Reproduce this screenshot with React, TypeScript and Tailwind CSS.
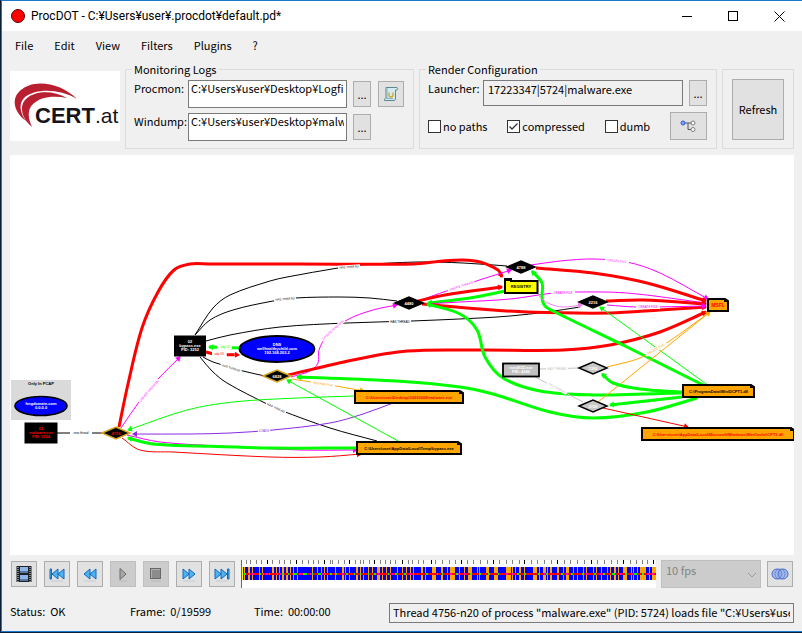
import { useState } from 'react';
import type { ReactNode } from 'react';

type Point = [number, number];

interface EdgeData {
  color: string;
  points: Point[];
  width?: number;
  arrow?: boolean;
  dash?: string;
}

interface LabelData {
  x: number;
  y: number;
  text: string;
  color: string;
  rotate?: number;
}

const RED = '#ff0000';
const GREEN = '#00ff00';
const PINK = '#ff00ff';
const BLACK = '#000000';
const ORANGE = '#ffa500';
const PURPLE = '#8a2be2';
const GRAY = '#c4c4c4';

const edges: EdgeData[] = [
  { color: BLACK, points: [[195, 335], [213, 308], [230, 295], [270, 281], [287, 277], [338, 268], [360, 265], [417, 262], [463, 263], [507, 266]] },
  { color: BLACK, points: [[195, 335], [210, 320], [233, 310], [273, 301], [295, 298], [340, 297], [370, 298], [397, 301]] },
  { color: BLACK, points: [[206, 341], [230, 335], [280, 327], [347, 323], [412, 321], [480, 318], [510, 316], [547, 312], [580, 307]] },
  { color: BLACK, points: [[203, 357], [213, 362], [243, 371], [265, 376]] },
  { color: BLACK, points: [[200, 357], [212, 371], [227, 383], [267, 404], [280, 410], [330, 428], [377, 441]] },
  { color: BLACK, points: [[57, 433], [103, 433]] },
  { color: RED, width: 3, arrow: true, points: [[119, 427], [128, 384], [142, 328], [158, 292], [174, 270], [190, 264], [210, 264], [300, 264], [413, 264], [443, 261], [463, 260], [480, 262], [498, 270], [502, 277]] },
  { color: GREEN, width: 3, arrow: true, dash: '10 13', points: [[240, 348], [209, 347]] },
  { color: RED, width: 3, arrow: true, dash: '8 13', points: [[206, 352], [214, 354], [239, 355]] },
  { color: PINK, arrow: true, points: [[121, 428], [139, 402], [158, 379], [180, 357]] },
  { color: GREEN, arrow: true, points: [[355, 396], [297, 398], [233, 402], [187, 410], [128, 430]] },
  { color: PURPLE, arrow: true, points: [[393, 403], [363, 414], [330, 423], [273, 430], [230, 433], [190, 434], [133, 434]] },
  { color: PINK, arrow: true, points: [[127, 435], [160, 442], [220, 446], [300, 450], [357, 450]] },
  { color: GREEN, width: 3, arrow: true, points: [[357, 448], [270, 448], [200, 446], [153, 444], [128, 438]] },
  { color: RED, arrow: true, points: [[122, 438], [140, 450], [173, 452], [270, 457], [320, 457], [361, 454]] },
  { color: PINK, arrow: true, points: [[291, 377], [310, 371], [318, 363], [319, 350], [327, 336], [347, 320], [373, 310], [397, 305]] },
  { color: RED, width: 3, arrow: true, points: [[288, 375], [353, 360], [407, 351], [480, 350], [563, 350], [610, 345], [660, 332], [706, 312]] },
  { color: ORANGE, arrow: true, points: [[292, 379], [330, 385], [364, 391]] },
  { color: GREEN, arrow: true, points: [[400, 442], [287, 380]] },
  { color: PINK, arrow: true, points: [[418, 301], [461, 286], [511, 270]] },
  { color: RED, width: 3, arrow: true, points: [[418, 301], [445, 295], [502, 287]] },
  { color: GREEN, width: 3, arrow: true, points: [[505, 291], [470, 298], [428, 303]] },
  { color: PINK, arrow: true, points: [[425, 304], [460, 302], [510, 299], [553, 293], [573, 292], [627, 293], [706, 303]] },
  { color: RED, width: 3, arrow: true, points: [[422, 304], [480, 309], [527, 312], [610, 313], [660, 310], [706, 307]] },
  { color: GREEN, width: 3, arrow: true, points: [[682, 393], [643, 394], [593, 395], [540, 391], [503, 378], [485, 357], [477, 330], [460, 314], [427, 304]] },
  { color: GREEN, width: 3, arrow: true, points: [[697, 398], [647, 412], [593, 418], [550, 412], [493, 394], [460, 387], [397, 381], [297, 377]] },
  { color: GREEN, width: 3, arrow: true, points: [[705, 386], [627, 347], [555, 312], [545, 306], [542, 298], [542, 283], [532, 271]] },
  { color: PINK, arrow: true, points: [[531, 265], [560, 261], [593, 259], [627, 262], [660, 273], [708, 299]] },
  { color: RED, width: 3, arrow: true, points: [[536, 268], [593, 273], [647, 283], [706, 301]] },
  { color: RED, width: 3, arrow: true, points: [[606, 301], [643, 300], [706, 304]] },
  { color: PINK, arrow: true, points: [[607, 305], [637, 307], [706, 306]] },
  { color: '#ee82ee', arrow: true, points: [[535, 291], [542, 299], [550, 304], [563, 307], [582, 305]] },
  { color: GREEN, arrow: true, points: [[709, 386], [600, 307]] },
  { color: ORANGE, points: [[607, 367], [640, 358], [668, 342], [710, 312]] },
  { color: ORANGE, arrow: true, points: [[598, 402], [654, 357], [710, 312]] },
  { color: GRAY, points: [[540, 369], [580, 368]] },
  { color: GRAY, points: [[535, 377], [583, 402]] },
  { color: GREEN, width: 3, arrow: true, points: [[682, 392], [640, 389], [613, 383], [602, 374]] },
  { color: GREEN, width: 3, arrow: true, points: [[682, 397], [610, 405]] },
  { color: RED, arrow: true, points: [[603, 408], [688, 427]] },
];

const edgeLabels: LabelData[] = [
  { x: 81, y: 433, text: 'new thread', color: BLACK },
  { x: 149, y: 391, text: 'CREATE PROCESS', color: PINK, rotate: -49 },
  { x: 225, y: 347, text: 'udp 53', color: GREEN },
  { x: 219, y: 354, text: 'udp 53', color: RED },
  { x: 231, y: 368, text: 'HAS THREAD', color: BLACK, rotate: 18 },
  { x: 264, y: 431, text: 'LOADS', color: PURPLE },
  { x: 276, y: 408, text: 'HAS THREAD', color: BLACK, rotate: 25 },
  { x: 285, y: 299, text: 'HAS THREAD', color: BLACK, rotate: -4 },
  { x: 349, y: 267, text: 'HAS THREAD', color: BLACK, rotate: -4 },
  { x: 400, y: 322, text: 'HAS THREAD', color: BLACK },
  { x: 333, y: 330, text: 'CREATE PROCESS', color: PINK, rotate: -42 },
  { x: 323, y: 384, text: 'RENAME FILE', color: ORANGE, rotate: 8 },
  { x: 461, y: 286, text: 'CREATE THREAD', color: PINK, rotate: -18 },
  { x: 617, y: 261, text: 'CREATE FILE', color: PINK, rotate: 5 },
  { x: 563, y: 293, text: 'CREATE FILE', color: PINK },
  { x: 648, y: 307, text: 'CREATE FILE', color: PINK },
  { x: 557, y: 369, text: 'HAS THREAD', color: GRAY },
  { x: 557, y: 388, text: 'HAS THREAD', color: GRAY, rotate: 28 },
  { x: 656, y: 349, text: 'DELETE FILE', color: ORANGE, rotate: -30 },
];

interface DiamondData {
  x: number;
  y: number;
  text: string;
  fill?: string;
  stroke?: string;
  color?: string;
}

const diamonds: DiamondData[] = [
  { x: 116, y: 433, text: '4756', stroke: '#daa520', color: RED },
  { x: 277, y: 376, text: '6828', stroke: '#daa520' },
  { x: 409, y: 303, text: '4480' },
  { x: 521, y: 267, text: '4788' },
  { x: 593, y: 302, text: '2216' },
  { x: 593, y: 368, text: '1392', fill: '#c8c8c8' },
  { x: 593, y: 406, text: '3720', fill: '#c8c8c8' },
];

interface FileData {
  x: number;
  y: number;
  w: number;
  text: string;
  color?: string;
}

const files: FileData[] = [
  { x: 355, y: 391, w: 108, text: 'C:\\Users\\user\\Desktop\\10220008\\malware.exe', color: RED },
  { x: 357, y: 442, w: 104, text: 'C:\\Users\\user\\AppData\\Local\\Temp\\bypass.exe' },
  { x: 708, y: 299, w: 20, text: 'MSFL', color: RED },
  { x: 683, y: 385, w: 71, text: 'C:\\ProgramData\\Win\\DCPT1.dll' },
  { x: 642, y: 428, w: 152, text: 'C:\\Users\\user\\AppData\\Local\\Microsoft\\Windows\\INetCache\\CPT1.dll', color: RED },
];

/* Timeline marks, in pixels from the left edge */
const tickMarks = [
  5, 9, 15, 20, 26, 31, 38, 43, 49, 55, 61, 67, 72, 77, 83, 89, 91, 97, 103, 108, 114, 119, 122, 128, 133, 139, 144, 149,
  154, 161, 167, 171, 177, 182, 190, 194, 201, 208, 214, 220, 226, 232, 239, 246, 252, 258, 265, 271, 278, 283, 290, 296,
  303, 310, 316, 323, 329, 336, 343, 350, 356, 363, 370, 376, 382, 389, 395, 401, 406, 412,
];
const boldTicks = [26, 55, 83, 108, 133, 161, 190, 220, 252, 283, 316, 350, 382, 412];

/* [start, width] */
const fileBars: Point[] = [
  [3, 1], [7, 2], [11, 1], [18, 1], [21, 1], [31, 2], [35, 1], [38, 1], [41, 2], [45, 2], [49, 1], [52, 1], [56, 1],
  [71, 1], [76, 1], [80, 1], [83, 1], [86, 1], [94, 1], [101, 2], [104, 1], [108, 1], [115, 2], [119, 1], [122, 1],
  [127, 1], [131, 1], [136, 3], [141, 1], [145, 1], [149, 1], [156, 1], [161, 1], [165, 1], [169, 1], [172, 1], [180, 2],
  [184, 1], [191, 4], [200, 2], [206, 1], [209, 5], [218, 1], [223, 1], [227, 4], [236, 1], [238, 1], [245, 3],
  [253, 4], [265, 5], [271, 1], [274, 1], [278, 2], [283, 1], [292, 4], [298, 1], [302, 3], [306, 1], [309, 2],
  [316, 2], [322, 1], [325, 3], [332, 1], [336, 1], [342, 1], [345, 1], [352, 1], [355, 1], [360, 1], [366, 1],
  [369, 1], [373, 2], [377, 1], [382, 4], [390, 1], [392, 1], [396, 1], [399, 6], [408, 1], [411, 4],
];

const greenMarks: Point[] = [
  [3, 2], [8, 1], [18, 2], [22, 1], [28, 1], [36, 1], [41, 2], [47, 1], [52, 4], [62, 4], [71, 1], [77, 3], [84, 1],
  [89, 2], [94, 2], [105, 2], [113, 1], [119, 1], [127, 1], [133, 2], [147, 1], [154, 2], [163, 2], [172, 1], [185, 2],
  [196, 1], [201, 1], [215, 2], [229, 2], [238, 2], [247, 2], [257, 1], [276, 2], [283, 2], [297, 2], [305, 2],
  [320, 2], [330, 2], [341, 2], [353, 2], [362, 2], [371, 3], [384, 2], [393, 3], [401, 2],
];

const pinkMarks: Point[] = [
  [11, 1], [25, 2], [39, 1], [58, 2], [69, 1], [81, 2], [101, 1], [110, 1], [137, 1], [151, 1], [168, 2], [176, 1],
  [192, 1], [209, 2], [217, 2], [223, 1], [244, 1], [265, 2], [271, 1], [303, 1], [310, 1], [325, 2], [345, 1], [359, 1],
  [368, 1], [379, 1], [390, 2], [406, 2], [411, 2],
];

function distance(a: Point, b: Point) {
  return Math.hypot(b[0] - a[0], b[1] - a[1]) || 1;
}

/* Smooth path that runs through every point, handles scaled by segment length */
function curve(points: Point[]) {
  let d = `M${points[0][0]},${points[0][1]}`;
  for (let i = 0; i < points.length - 1; i++) {
    const p0 = points[i - 1] ?? points[i];
    const p1 = points[i];
    const p2 = points[i + 1];
    const p3 = points[i + 2] ?? p2;
    const handle = distance(p1, p2) / 3;
    const k1 = handle / distance(p0, p2);
    const k2 = handle / distance(p1, p3);
    d += ` C${p1[0] + (p2[0] - p0[0]) * k1},${p1[1] + (p2[1] - p0[1]) * k1}`;
    d += ` ${p2[0] - (p3[0] - p1[0]) * k2},${p2[1] - (p3[1] - p1[1]) * k2} ${p2[0]},${p2[1]}`;
  }
  return d;
}

function Edge({ color, points, width = 1, arrow, dash }: EdgeData) {
  const end = points[points.length - 1];
  const prev = points[points.length - 2];
  const angle = (Math.atan2(end[1] - prev[1], end[0] - prev[0]) * 180) / Math.PI;
  return (
    <g>
      <path d={curve(points)} fill="none" stroke={color} strokeWidth={width} strokeDasharray={dash} />
      {arrow && (
        <path d="M1,0 L-4,-3 L-4,3 Z" fill={color} transform={`translate(${end[0]} ${end[1]}) rotate(${angle})`} />
      )}
    </g>
  );
}

function Graph() {
  return (
    <svg
      viewBox="10 155 784 400"
      className="block w-full h-auto bg-white text-[4px] font-bold font-['Liberation_Sans',sans-serif]"
      textAnchor="middle"
      role="img"
      aria-label="Process graph"
    >
      {/* Traffic that was seen only in the capture */}
      <rect x="11" y="380" width="60" height="40" fill="#dadada" />
      <text x="41" y="385">Only In PCAP</text>
      <ellipse cx="41" cy="406" rx="26" ry="9.5" fill="#0000ff" stroke="#000" strokeWidth="1.6" />
      <text x="41" y="405" fill="#fff">hngdomain.com</text>
      <text x="41" y="409" fill="#fff">0.0.0.0</text>

      {edges.map((edge, i) => (
        <Edge key={i} {...edge} />
      ))}

      {edgeLabels.map((label, i) => (
        <g key={i} transform={`translate(${label.x} ${label.y}) rotate(${label.rotate ?? 0})`}>
          <rect x={-label.text.length - 1} y="-2" width={label.text.length * 2 + 2} height="4" fill="#fff" />
          <text y="1" fill={label.color} className="text-[3px] font-normal">
            {label.text}
          </text>
        </g>
      ))}

      {/* Processes */}
      <rect x="24.5" y="422.5" width="33" height="21" />
      <text x="41" y="430" fill={RED}>01</text>
      <text x="41" y="434" fill={RED}>malware.exe</text>
      <text x="41" y="438" fill={RED}>PID: 5724</text>
      <rect x="174" y="335.5" width="32" height="21" />
      <text x="190" y="343" fill="#fff">02</text>
      <text x="190" y="347" fill="#fff">bypass.exe</text>
      <text x="190" y="351" fill="#fff">PID: 3252</text>
      <rect x="503" y="363.5" width="36" height="13" fill="#c0c0c0" stroke="#000" strokeWidth="1.8" />
      <text x="521" y="369" fill="#fff">rundll32.exe</text>
      <text x="521" y="373" fill="#fff">PID: 4240</text>

      <ellipse cx="277" cy="349" rx="37.5" ry="13" fill="#0000ff" stroke="#000" strokeWidth="1.8" />
      <text x="277" y="346" fill="#fff">DNS</text>
      <text x="277" y="350" fill="#fff">wellhealthychild.com</text>
      <text x="277" y="354" fill="#fff">192.168.203.2</text>

      {/* Registry */}
      <path d="M505,281 v-2 h6 v2 h26.500 v12 h-32.500 Z" fill="#ffff00" stroke="#000" strokeWidth="2" />
      <rect x="505" y="278.500" width="6" height="2.500" />
      <text x="521" y="288">REGISTRY</text>

      {diamonds.map((node) => (
        <g key={node.text} transform={`translate(${node.x} ${node.y})`}>
          <path d="M-14,0 L0,-6 L14,0 L0,6 Z" fill={node.fill ?? '#000'} stroke={node.stroke ?? '#000'} strokeWidth="1.5" />
          <text y="1.500" fill={node.color ?? '#fff'}>{node.text}</text>
        </g>
      ))}

      {files.map((file) => (
        <g key={file.text} transform={`translate(${file.x} ${file.y})`}>
          <path d={`M0,0 H${file.w - 3} L${file.w},2 V12 H0 Z`} fill={ORANGE} stroke="#000" strokeWidth="2" />
          <path d={`M${file.w - 4},0 H${file.w - 2} L${file.w},3 H${file.w - 4} Z`} />
          <text x={file.w / 2} y="7.500" fill={file.color ?? '#000'} className={file.w < 30 ? 'text-[5px]' : 'text-[4px]'}>
            {file.text}
          </text>
        </g>
      ))}
    </svg>
  );
}

function Timeline() {
  return (
    <svg
      viewBox="0 0 415 28"
      preserveAspectRatio="none"
      shapeRendering="crispEdges"
      className="h-7 min-w-0 flex-1 bg-white"
      role="img"
      aria-label="Timeline"
    >
      {tickMarks.map((x) => (
        <rect key={x} x={x} y="0" width="1" height="4" fill={boldTicks.includes(x) ? '#000' : '#808080'} />
      ))}
      <rect x="0" y="7" width="415" height="13" fill="#0000ff" />
      {fileBars.map(([x, w]) => (
        <rect key={x} x={x} y="7" width={w} height="13" fill={ORANGE} />
      ))}
      <rect x="0" y="13" width="415" height="2" fill={RED} />
      {greenMarks.map(([x, w]) => (
        <rect key={x} x={x} y="13" width={w} height="2" fill={GREEN} />
      ))}
      {pinkMarks.map(([x, w]) => (
        <rect key={x} x={x} y="13" width={w} height="2" fill={PINK} />
      ))}
      <rect x="1" y="7" width="1" height="13" fill="#ffff00" />
      <rect x="0" y="0" width="1" height="28" fill="#ff1493" />
    </svg>
  );
}

function Logo() {
  return (
    <svg viewBox="0 0 110 70" className="h-[70px] w-[110px] bg-white" role="img" aria-label="CERT.at">
      <path d="M16,50 C4,41 2,29 8,22 C19,8 48,9 67,28 C50,18 27,17 15,26 C8,32 10,42 16,50 Z" fill="#b81f31" />
      <path d="M22,56 C12,48 9,36 15,29 C24,19 43,19 57,27 C43,24 30,26 23,33 C17,39 18,47 22,56 Z" fill="#b81f31" />
      <text x="25" y="52" fill="#17131a" className="text-[22px] font-bold font-['Liberation_Sans',sans-serif]">
        CERT<tspan className="text-[21px] font-normal">.at</tspan>
      </text>
    </svg>
  );
}

function FilmIcon() {
  return (
    <svg viewBox="0 0 16 16" className="size-4">
      <rect x="0.500" y="0" width="15" height="16" fill="#1d2126" />
      <rect x="4" y="1" width="8" height="6" fill="#8fb4e8" />
      <rect x="4" y="9" width="8" height="6" fill="#8fb4e8" />
      <path d="M4,5 h8 v2 h-8 Z M4,13 h8 v2 h-8 Z" fill="#56779f" />
      <path d="M2,1 v15 M14,1 v15" stroke="#dfe6ee" strokeWidth="1" strokeDasharray="1 1" />
    </svg>
  );
}

const TRIANGLE = 'M0,-5 L6,0 L0,5 Z';

function SeekIcon({ back, bar }: { back?: boolean; bar?: boolean }) {
  return (
    <svg viewBox="0 0 16 16" className="size-4">
      <g transform={back ? 'translate(16 0) scale(-1 1)' : undefined} fill="#4db4f4" stroke="#1466b8" strokeWidth="1" strokeLinejoin="round">
        <path d={TRIANGLE} transform={bar ? 'translate(1 8)' : 'translate(2 8)'} />
        <path d={TRIANGLE} transform={bar ? 'translate(7 8)' : 'translate(8 8)'} />
        {bar && <rect x="13.500" y="3" width="1.500" height="10" />}
      </g>
      <path d="M2,15 h12" stroke="#c4ccd4" />
    </svg>
  );
}

function PlayIcon() {
  return (
    <svg viewBox="0 0 16 16" className="size-4">
      <path d="M5,2.500 L11,8 L5,13.500 Z" fill="#a8a8a8" stroke="#6a6a6a" strokeLinejoin="round" />
      <path d="M4,15 h8" stroke="#b8b8b8" />
    </svg>
  );
}

function StopIcon() {
  return (
    <svg viewBox="0 0 16 16" className="size-4">
      <rect x="2.500" y="2.500" width="10" height="10" fill="#8c8c8c" stroke="#666" />
      <path d="M3.500,12 V3.500 H12" fill="none" stroke="#b0b0b0" />
      <path d="M3,15 h10" stroke="#b8b8b8" />
    </svg>
  );
}

function RingsIcon() {
  return (
    <svg viewBox="0 0 18 14" className="h-[14px] w-[18px]" stroke="#4a6cc8" fill="#7da0ec" fillOpacity="0.6">
      <circle cx="6" cy="7" r="5" />
      <circle cx="12" cy="7" r="5" />
      <circle cx="9" cy="7" r="5" fill="none" strokeOpacity="0.6" />
    </svg>
  );
}

function ScrollIcon() {
  return (
    <svg viewBox="0 0 16 16" className="size-4">
      <path d="M3,1.500 H14 Q15.500,2 14,4 H12.500 V13 Q12,15 10,14.500 H1.500 Q0.500,13 3,12 Z" fill="#d5eaee" stroke="#5d8791" />
      <path d="M4,2 V12 M2,12.500 H10" stroke="#8cb2ba" fill="none" />
      <path d="M6,6.500 V9 Q6,11 8,11 Q10,11 10,9 V6.500" stroke="#c9a52c" strokeWidth="1.300" fill="none" />
    </svg>
  );
}

function TreeIcon() {
  return (
    <svg viewBox="0 0 16 12" className="h-3 w-4" fill="#fff" stroke="#7d7d7d">
      <path d="M5,3 H11 M8,3 V9.500 H11" fill="none" stroke="#555" />
      <circle cx="3" cy="3" r="2" fill="#7ea6ff" stroke="#2f55d4" />
      <circle cx="13" cy="3" r="2" />
      <circle cx="13" cy="9.500" r="2" />
    </svg>
  );
}

interface ToolButtonProps {
  label: string;
  children: ReactNode;
  size?: string;
  disabled?: boolean;
}

function ToolButton({ label, children, size = 'size-[26px]', disabled }: ToolButtonProps) {
  return (
    <button
      aria-label={label}
      disabled={disabled}
      className={`${size} shrink-0 flex items-center justify-center border border-[#adadad] bg-[#e1e1e1] hover:bg-[#e5f1fb] disabled:border-[#bfbfbf] disabled:bg-[#cccccc]`}
    >
      {children}
    </button>
  );
}

function LogRow({ id, label, path, children }: { id: string; label: string; path: string; children?: ReactNode }) {
  return (
    <div className="flex h-7 items-center">
      <label htmlFor={id} className="w-[54px] shrink-0 self-start">
        {label}
      </label>
      <input
        id={id}
        defaultValue={path}
        className="h-7 min-w-0 flex-1 border border-[#7a7a7a] bg-white px-[2px] pb-3 outline-none"
      />
      <div className="flex w-[57px] shrink-0 gap-[7px] pl-[6px]">
        <ToolButton label={`Browse ${label}`} size="h-[26px] w-[18px]">
          ...
        </ToolButton>
        {children}
      </div>
    </div>
  );
}

function CheckBox({ label, initial = false }: { label: string; initial?: boolean }) {
  const [checked, setChecked] = useState(initial);
  return (
    <label className="relative flex items-center gap-[2px]">
      <input
        type="checkbox"
        checked={checked}
        onChange={(e) => setChecked(e.target.checked)}
        className="size-[13px] appearance-none border border-[#333333] bg-white"
      />
      {checked && (
        <svg viewBox="0 0 13 13" className="pointer-events-none absolute left-0 size-[13px]">
          <path d="M2.500,6.500 L5,9 L10.500,3.500" fill="none" stroke="#333" strokeWidth="1.300" />
        </svg>
      )}
      {label}
    </label>
  );
}

export default function App() {
  return (
    <div className="border-b border-l border-[#08203c] bg-[#f0f0f0] text-[11px] leading-4 text-black font-['Noto_Sans_CJK_JP',sans-serif]">
      <div className="border-t border-b border-l border-[#1979ca]">
        {/* Title bar */}
        <header className="flex h-[30px] items-center bg-white pl-[9px]">
          <svg viewBox="0 0 14 14" className="mr-[6px] size-[14px]">
            <circle cx="7" cy="7" r="6.500" fill="#ff0000" stroke="#5a0000" />
          </svg>
          <h1 className="flex-1 text-[12px] font-['Roboto',sans-serif]">ProcDOT - C:¥Users¥user¥.procdot¥default.pd*</h1>
          <button aria-label="Minimize" className="flex h-full w-[46px] items-center justify-center">
            <svg viewBox="0 0 11 11" className="size-[11px]" stroke="#000">
              <path d="M0,5.500 H10" />
            </svg>
          </button>
          <button aria-label="Maximize" className="flex h-full w-[46px] items-center justify-center">
            <svg viewBox="0 0 11 11" className="size-[11px]" stroke="#000" fill="none">
              <rect x="0.500" y="0.500" width="9" height="9" />
            </svg>
          </button>
          <button aria-label="Close" className="flex h-full w-[46px] items-center justify-center">
            <svg viewBox="0 0 11 11" className="size-[11px]" stroke="#000">
              <path d="M0.500,0.500 L10.500,10.500 M10.500,0.500 L0.500,10.500" />
            </svg>
          </button>
        </header>

        <nav className="flex h-[30px] items-center gap-[21px] pb-[2px] pl-[13px]">
          <button>File</button>
          <button>Edit</button>
          <button>View</button>
          <button>Filters</button>
          <button>Plugins</button>
          <button>?</button>
        </nav>

        <div className="px-2">
          <div className="grid grid-cols-[110px_289fr_298fr_72px] items-end gap-x-[5px]">
            <div className="mb-2">
              <Logo />
            </div>

            <fieldset className="min-w-0 border border-[#dcdcdc]">
              <legend className="ml-[6px] px-[2px]">Monitoring Logs</legend>
              <div className="flex flex-col gap-[5px] pt-[3px] pb-[7px] pl-2 pr-[9px]">
                <LogRow id="procmon" label="Procmon:" path="C:¥Users¥user¥Desktop¥Logfile.CSV">
                  <ToolButton label="Show log">
                    <ScrollIcon />
                  </ToolButton>
                </LogRow>
                <LogRow id="windump" label="Windump:" path="C:¥Users¥user¥Desktop¥malware.pcap" />
              </div>
            </fieldset>

            <fieldset className="min-w-0 border border-[#dcdcdc]">
              <legend className="ml-[6px] px-[2px]">Render Configuration</legend>
              <div className="flex flex-col gap-1 pt-[3px] pb-2 pl-2 pr-[9px]">
                <div className="flex h-7 items-start">
                  <label htmlFor="launcher" className="w-[55px] shrink-0">
                    Launcher:
                  </label>
                  <input
                    id="launcher"
                    readOnly
                    value="17223347|5724|malware.exe"
                    className="mr-[6px] h-[26px] min-w-0 flex-1 border border-[#7a7a7a] bg-[#f0f0f0] px-1 pb-2 outline-none"
                  />
                  <ToolButton label="Choose launcher" size="h-[26px] w-[18px]">
                    ...
                  </ToolButton>
                </div>
                <div className="flex h-7 items-center justify-between">
                  <CheckBox label="no paths" />
                  <CheckBox label="compressed" initial />
                  <CheckBox label="dumb" />
                  <ToolButton label="Graph layout" size="h-7 w-[37px]">
                    <TreeIcon />
                  </ToolButton>
                </div>
              </div>
            </fieldset>

            <div className="border border-[#dcdcdc] px-[9px] pt-[9px] pb-2">
              <button className="h-[61px] w-full border border-[#adadad] bg-[#e1e1e1] pb-[2px] hover:bg-[#e5f1fb]">
                Refresh
              </button>
            </div>
          </div>

          <main className="mt-[6px]">
            <Graph />
          </main>

          {/* Playback */}
          <div className="mt-[5px] flex items-center">
            <div className="mr-[6px] ml-px flex gap-[7px]">
              <ToolButton label="Animation mode">
                <FilmIcon />
              </ToolButton>
              <ToolButton label="First frame">
                <SeekIcon back bar />
              </ToolButton>
              <ToolButton label="Rewind">
                <SeekIcon back />
              </ToolButton>
              <ToolButton label="Play" disabled>
                <PlayIcon />
              </ToolButton>
              <ToolButton label="Stop" disabled>
                <StopIcon />
              </ToolButton>
              <ToolButton label="Forward">
                <SeekIcon />
              </ToolButton>
              <ToolButton label="Last frame">
                <SeekIcon bar />
              </ToolButton>
            </div>
            <Timeline />
            <div className="relative mr-[6px] ml-[5px] w-[100px]">
              <select
                aria-label="Frames per second"
                disabled
                className="block h-7 w-full appearance-none border border-[#bfbfbf] bg-[#cccccc] pb-2 pl-1 text-[#838383] opacity-100"
              >
                <option>10 fps</option>
              </select>
              <svg viewBox="0 0 10 6" className="pointer-events-none absolute right-1 top-3 h-[6px] w-[10px]" fill="none" stroke="#9a9a9a">
                <path d="M1,1 L5,5 L9,1" />
              </svg>
            </div>
            <div className="mr-px">
              <ToolButton label="Compare">
                <RingsIcon />
              </ToolButton>
            </div>
          </div>

          {/* Status bar */}
          <footer className="grid grid-cols-[120px_124px_135px_1fr] pt-[15px] pb-2">
            <span>Status: &nbsp;OK</span>
            <span>Frame: &nbsp;0/19599</span>
            <span>Time: &nbsp;00:00:00</span>
            <input
              aria-label="Current event"
              readOnly
              value={'Thread 4756-n20 of process "malware.exe" (PID: 5724) loads file "C:¥Users¥user¥Desktop¥malware.exe"'}
              className="h-5 w-full min-w-0 border border-[#7a7a7a] bg-[#f0f0f0] px-[3px] pb-[2px] outline-none"
            />
          </footer>
        </div>
      </div>
    </div>
  );
}
